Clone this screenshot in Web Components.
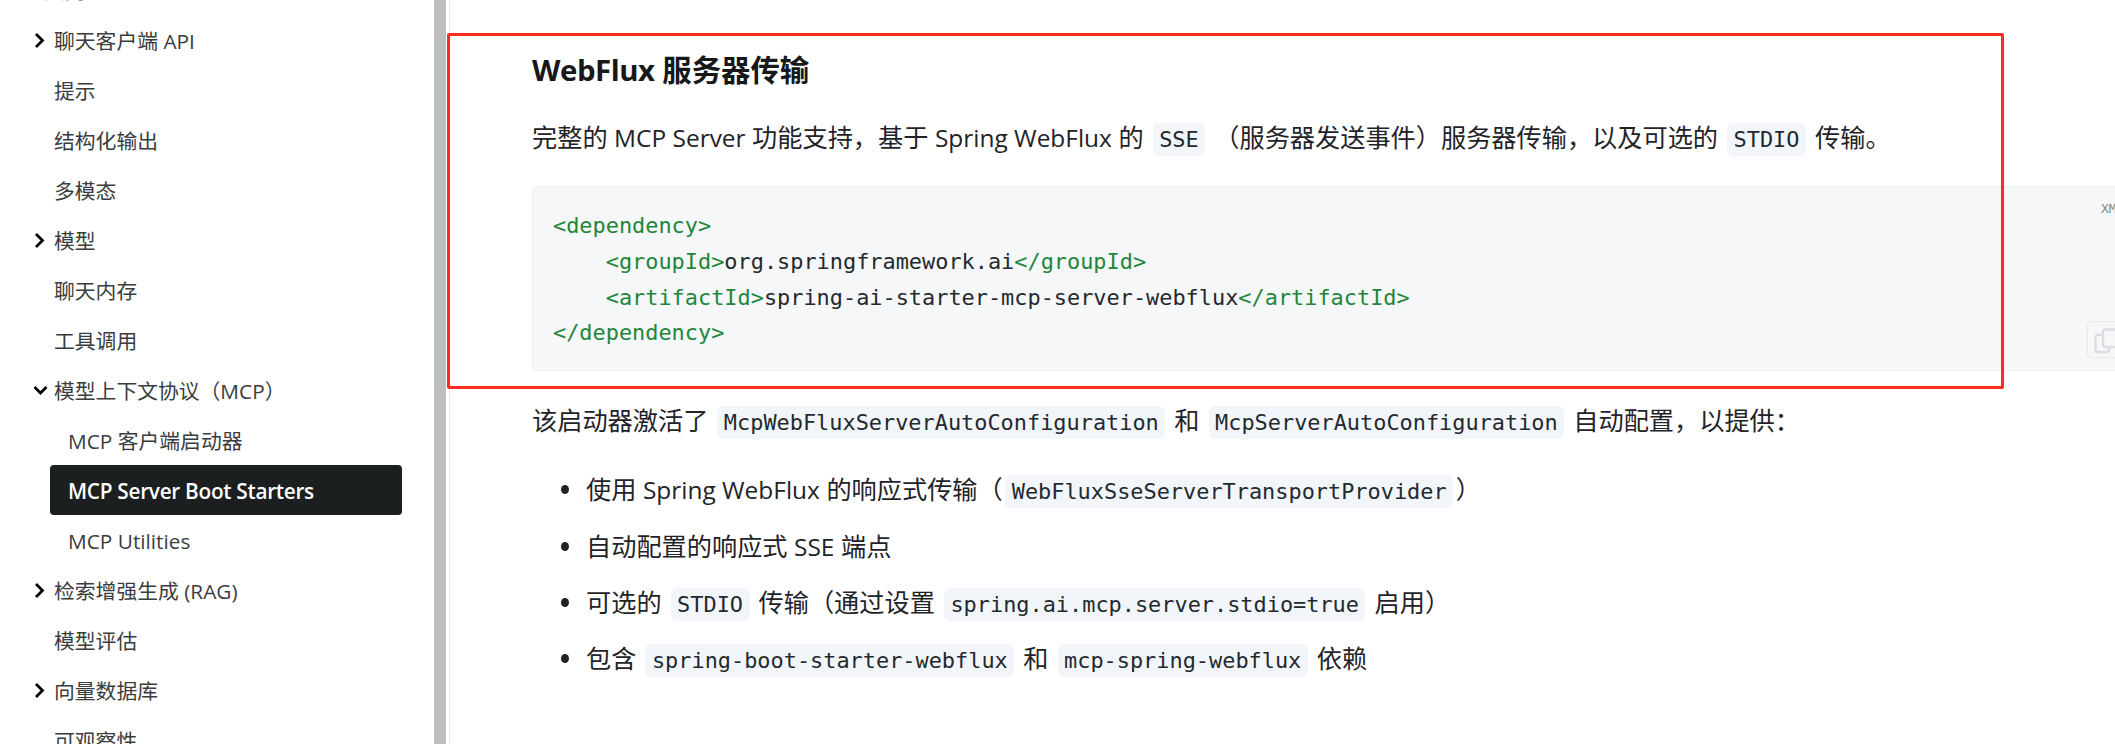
<!DOCTYPE html>
<html lang="zh"><head><meta charset="utf-8">
<style>
html,body{margin:0;padding:0;height:744px;overflow:hidden;background:#fff}
body{font-family:"Open Sans","Noto Sans CJK SC",sans-serif;color:#1f2328;display:flex}
</style></head><body>
<side-nav>
  <nav-item top>入门</nav-item>
  <nav-item kind="closed">聊天客户端 API</nav-item>
  <nav-item>提示</nav-item>
  <nav-item>结构化输出</nav-item>
  <nav-item>多模态</nav-item>
  <nav-item kind="closed">模型</nav-item>
  <nav-item>聊天内存</nav-item>
  <nav-item>工具调用</nav-item>
  <nav-item kind="open">模型上下文协议（MCP）</nav-item>
  <nav-item sub>MCP 客户端启动器</nav-item>
  <nav-item sub active>MCP Server Boot Starters</nav-item>
  <nav-item sub>MCP Utilities</nav-item>
  <nav-item kind="closed">检索增强生成 (RAG)</nav-item>
  <nav-item>模型评估</nav-item>
  <nav-item kind="closed">向量数据库</nav-item>
  <nav-item>可观察性</nav-item>
</side-nav>
<doc-main>
  <doc-h><la-t tight>WebFlux</la-t> 服务器传输</doc-h>
  <doc-p>完整的 <la-t>MCP Server</la-t> 功能支持，基于 <la-t>Spring WebFlux</la-t> 的 <in-code>SSE</in-code> （服务器发送事件）服务器传输，以及可选的 <in-code>STDIO</in-code> 传输。</doc-p>
  <code-block></code-block>
  <doc-p after>该启动器激活了 <in-code>McpWebFluxServerAutoConfiguration</in-code> 和 <in-code>McpServerAutoConfiguration</in-code> 自动配置，以提供：</doc-p>
  <doc-ul>
    <doc-li>使用 <la-t>Spring WebFlux</la-t> 的响应式传输（<in-code>WebFluxSseServerTransportProvider</in-code>）</doc-li>
    <doc-li>自动配置的响应式 <la-t>SSE</la-t> 端点</doc-li>
    <doc-li>可选的 <in-code>STDIO</in-code> 传输（通过设置 <in-code>spring.ai.mcp.server.stdio=true</in-code> 启用）</doc-li>
    <doc-li>包含 <in-code>spring-boot-starter-webflux</in-code> 和 <in-code>mcp-spring-webflux</in-code> 依赖</doc-li>
  </doc-ul>
  <red-box></red-box>
</doc-main>
<script>
function def(name, css, html, init){
  customElements.define(name, class extends HTMLElement{
    constructor(){super();const r=this.attachShadow({mode:'open'});r.innerHTML='<style>'+css+'</style>'+(html||'<slot></slot>');}
    connectedCallback(){if(init)init(this);}
  });
}
const MONO='"DejaVu Sans Mono","Noto Sans CJK SC",monospace';
def('la-t',`:host{display:inline;font-size:.97em}:host([tight]){font-size:1em;letter-spacing:-.45px}`);
def('side-nav',`:host{display:block;width:434px;height:744px;flex:none;overflow:hidden;position:relative}
 .list{display:flex;flex-direction:column;margin-top:-35px;padding-right:32px}`,`<div class="list"><slot></slot></div>`);
const chev={closed:'<path d="M3 1 L9.500 7.500 L3 14"/>',open:'<path d="M1.500 4 L7.500 10 L13.500 4"/>'};
def('nav-item',`:host{display:flex;align-items:center;height:50px;box-sizing:border-box;font-size:20.8px;color:#3a3d40;position:relative;padding:2px 0 0 54px;white-space:nowrap;border-radius:4px;line-height:1}
 :host([sub]){padding-left:18px;margin-left:50px}
 :host([top]){padding-left:44px}
 :host([active]){background:#1b1f20;color:#fff;font-weight:600;letter-spacing:-.3px}
 svg{position:absolute;left:33px;top:17.500px;width:15px;height:15px;fill:none;stroke:#000;stroke-width:2.800}
 `,`<slot></slot>`,el=>{const k=el.getAttribute('kind');if(k){const s=document.createElementNS('http://www.w3.org/2000/svg','svg');s.setAttribute('viewBox','0 0 15 15');s.innerHTML=chev[k];el.shadowRoot.appendChild(s);}});
def('doc-main',`:host{display:block;flex:1;min-width:0;position:relative;height:744px;overflow:hidden}
 .bar{position:absolute;left:0;top:0;width:12px;height:100%;background:#bdbdbd}
 .line{position:absolute;left:15px;top:0;width:1px;height:100%;background:#ececec}
 .wrap{padding:49px 0 0 98px;width:1700px}`,`<div class="bar"></div><div class="line"></div><div class="wrap"><slot></slot></div>`);
def('doc-h',`:host{display:block;font-size:29.400px;font-weight:700;line-height:42px;color:#16181a}`);
def('doc-p',`:host{display:block;font-size:25.200px;line-height:36px;color:#1f2328;margin-top:28px;white-space:nowrap}
 :host([after]){margin-top:31px}`);
def('in-code',`:host{display:inline;font-family:${MONO};font-size:21.900px;line-height:1;padding:4px 6.500px;background:#f2f6fb;border-radius:6px;color:#24292e;margin:0 2.500px}`);
def('doc-ul',`:host{display:flex;flex-direction:column;gap:19.600px;margin-top:33px}`);
def('doc-li',`:host{display:block;font-size:25.200px;line-height:36px;padding-left:54px;position:relative;white-space:nowrap;color:#1f2328}
 i{position:absolute;left:29px;top:14px;width:8px;height:9px;border-radius:50%;background:#1f2328}`,`<i></i><slot></slot>`);
def('code-block',`:host{display:block;width:1700px;height:185px;margin-top:30px;box-sizing:border-box;background:#f6f7f9;border:1px solid #f0f1f3;border-radius:6px;position:relative;padding:21px 0 0 20px;font-family:${MONO};font-size:21.900px;line-height:35.800px;color:#24292e;white-space:pre}
 b{font-weight:400;color:#22863a}
 .lang{position:absolute;left:1568px;top:14px;font-size:13px;line-height:16px;color:#8a8a8a}
 .copy{position:absolute;left:1554px;top:134px;width:60px;height:37px;box-sizing:border-box;border:1px solid #e8e9ec;border-radius:4px;background:#f6f7f9}
 .copy svg{position:absolute;left:6px;top:6px;width:28px;height:26px;fill:none;stroke:#dcdde0;stroke-width:2.400}`,
 `<div><b>&lt;dependency&gt;</b>
    <b>&lt;groupId&gt;</b>org.springframework.ai<b>&lt;/groupId&gt;</b>
    <b>&lt;artifactId&gt;</b>spring-ai-starter-mcp-server-webflux<b>&lt;/artifactId&gt;</b>
<b>&lt;/dependency&gt;</b></div><span class="lang">XML</span><div class="copy"><svg viewBox="0 0 28 26"><path d="M8 7H3.500A2 2 0 0 0 1.500 9V22A2 2 0 0 0 3.500 24H13A2 2 0 0 0 15 22V19"/><rect x="9" y="1.500" width="18" height="17.500" rx="2.500"/></svg></div>`);
def('red-box',`:host{position:absolute;left:13px;top:33px;width:1557px;height:356px;box-sizing:border-box;border:3px solid #ff2a20;border-radius:2px;pointer-events:none}`);
</script>
</body></html>
